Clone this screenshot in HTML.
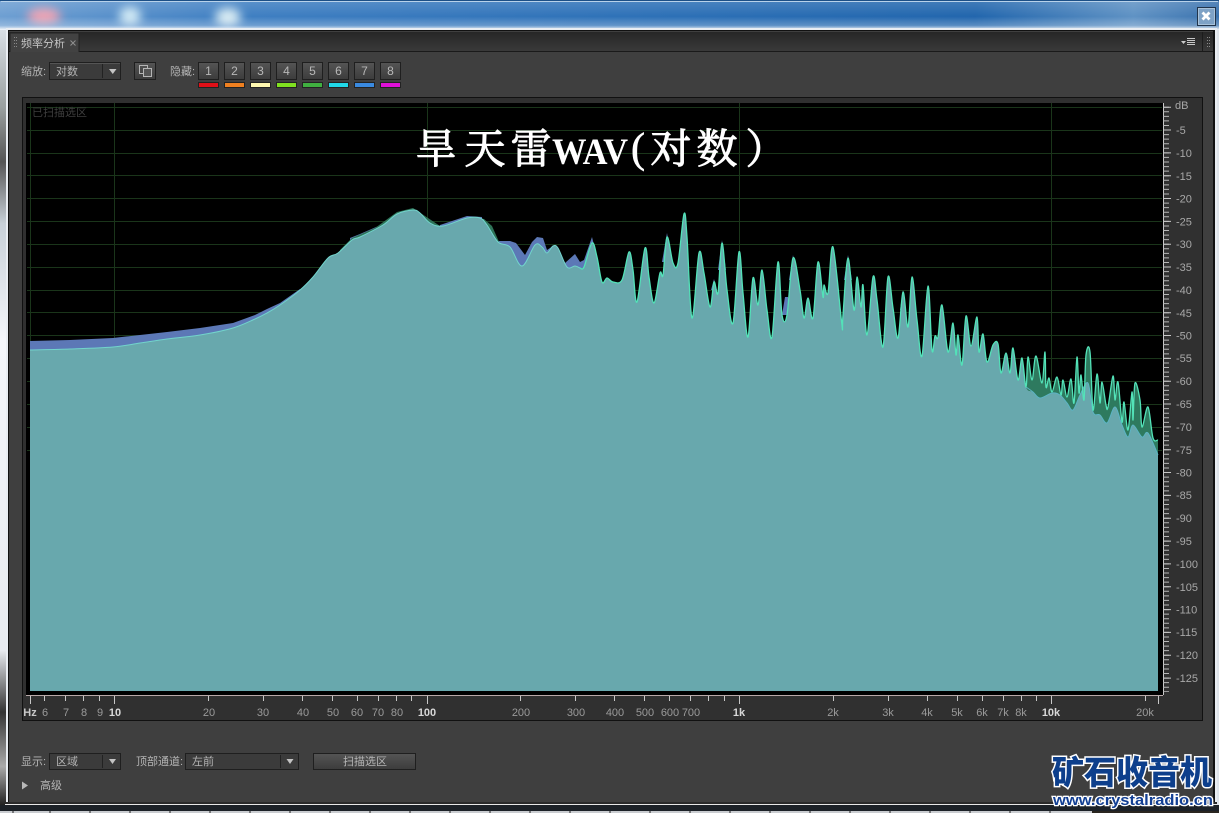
<!DOCTYPE html>
<html lang="zh">
<head>
<meta charset="utf-8">
<title>频率分析</title>
<style>
html,body{margin:0;padding:0;background:#3f3f3f;width:1219px;height:813px;overflow:hidden}
svg{display:block;position:absolute;left:0;top:0}
.l{font-family:"Liberation Sans","Noto Sans CJK SC",sans-serif;font-size:11px;fill:#b4b4b4}
.t{font-family:"Noto Serif CJK SC",serif;font-size:41px;fill:#fff;stroke:#fff;stroke-width:1;text-anchor:middle}
</style>
</head>
<body>
<svg width="1219" height="813" viewBox="0 0 1219 813" xmlns="http://www.w3.org/2000/svg">
<defs>
<linearGradient id="top" x1="0" x2="1" y1="0" y2="0">
<stop offset="0" stop-color="#6e9fd2"/><stop offset=".2" stop-color="#3f7fc2"/><stop offset=".5" stop-color="#2f72b8"/><stop offset=".8" stop-color="#2266ad"/><stop offset=".93" stop-color="#5f92c4"/><stop offset="1" stop-color="#3a72ae"/>
</linearGradient>
<linearGradient id="fade" x1="0" x2="0" y1="0" y2="1">
<stop offset="0" stop-color="#fff" stop-opacity=".15"/><stop offset=".55" stop-color="#fff" stop-opacity="0"/><stop offset=".85" stop-color="#fff" stop-opacity=".25"/><stop offset="1" stop-color="#fff" stop-opacity=".95"/>
</linearGradient>
<linearGradient id="tb" x1="0" x2="0" y1="0" y2="1"><stop offset="0" stop-color="#262626"/><stop offset="1" stop-color="#3a3a3a"/></linearGradient>
<linearGradient id="btn" x1="0" x2="0" y1="0" y2="1"><stop offset="0" stop-color="#555"/><stop offset="1" stop-color="#3c3c3c"/></linearGradient>
<linearGradient id="left" x1="0" x2="0" y1="0" y2="1">
<stop offset="0" stop-color="#d8dee4"/><stop offset=".1" stop-color="#9aa0a0"/><stop offset=".17" stop-color="#555"/><stop offset=".25" stop-color="#c8d0d8"/><stop offset=".4" stop-color="#f4f6fa"/><stop offset=".8" stop-color="#e8ebf0"/><stop offset=".88" stop-color="#333"/><stop offset=".95" stop-color="#aaa"/><stop offset="1" stop-color="#222"/>
</linearGradient>
<filter id="bl" x="-50%" y="-50%" width="200%" height="200%"><feGaussianBlur stdDeviation="5"/></filter>
<filter id="soft" filterUnits="userSpaceOnUse" x="20" y="100" width="1150" height="600"><feGaussianBlur stdDeviation="0.35"/></filter>
</defs>

<!-- desktop behind -->
<rect width="1219" height="813" fill="#dfe4ea"/>
<rect x="0" y="30" width="7" height="775" fill="url(#left)"/>
<rect width="1219" height="30" fill="url(#top)"/>
<ellipse cx="44" cy="16" rx="17" ry="8" fill="#f2a4b4" filter="url(#bl)"/>
<ellipse cx="130" cy="16" rx="11" ry="9" fill="#d4ecf6" filter="url(#bl)"/>
<ellipse cx="228" cy="17" rx="13" ry="9" fill="#dceef4" filter="url(#bl)"/>
<rect width="1219" height="30" fill="url(#fade)"/>
<rect width="1219" height="1" fill="#1c4f86"/>
<rect x="1" y="1" width="1217" height="1" fill="#b8d2ea"/>

<!-- window frame -->
<rect x="6" y="28" width="1211" height="777" fill="#e9edf2"/>
<rect x="8" y="30" width="1207" height="773" fill="#111"/>
<rect x="9" y="31" width="1204" height="771" fill="#3f3f3f"/>
<rect x="5" y="802" width="1212" height="2" fill="#2a2a2a"/>
<rect x="5" y="804" width="1212" height="1" fill="#e8e8e8"/>
<rect x="0" y="805" width="1219" height="6" fill="#1c2127"/>
<rect x="0" y="811" width="1219" height="2" fill="#c9ccd0"/>
<path d="M13 811v2M50 811v2M90 811v2M130 811v2M170 811v2M210 811v2M250 811v2M290 811v2M330 811v2M370 811v2M410 811v2M450 811v2M490 811v2M530 811v2M570 811v2M610 811v2M650 811v2M690 811v2M730 811v2M770 811v2M810 811v2M850 811v2M890 811v2M930 811v2M970 811v2M1010 811v2M1050 811v2" stroke="#222"/>
<rect x="1092" y="811" width="127" height="2" fill="#2a2620"/>

<!-- close button -->
<rect x="1197.500" y="7.500" width="18" height="18" fill="#4f7fb0" stroke="#20344c"/>
<rect x="1198.500" y="8.500" width="16" height="16" fill="#7ea2c6" stroke="#a8c2da"/>
<path d="M1202.500 12.500l7 7M1209.500 12.500l-7 7" stroke="#fff" stroke-width="2.800"/>

<!-- tab bar -->
<rect x="9" y="32" width="1204" height="20" fill="url(#tb)"/>
<rect x="9" y="51" width="1204" height="1" fill="#1a1a1a"/>
<path d="M10 52V33h69v19" fill="#424242" stroke="#222"/>
<path d="M14 37.500h3M14 40.500h3M14 43.500h3M14 46.500h3" stroke="#8a8a8a" stroke-dasharray="1 1"/>
<text class="l" x="21" y="47" style="fill:#c4c4c4">频率分析</text>
<path d="M70.500 40.500l5 5M75.500 40.500l-5 5" stroke="#909090"/>
<path d="M1181 41h5l-2.500 3z" fill="#ccc"/>
<path d="M1187 38.500h8M1187 40.500h8M1187 42.500h8M1187 44.500h8" stroke="#c8c8c8"/>
<path d="M1202.500 32v19" stroke="#1c1c1c"/>
<path d="M1207 37.500h3M1207 40.500h3M1207 43.500h3M1207 46.500h3" stroke="#8a8a8a" stroke-dasharray="1 1"/>

<!-- top controls -->
<text class="l" x="21" y="75">缩放:</text>
<rect x="49.500" y="62.500" width="71" height="17" fill="#3b3b3b" stroke="#1f1f1f"/>
<path d="M50 63.500h70" stroke="#555"/>
<text class="l" x="56" y="75">对数</text>
<path d="M102.500 64v14" stroke="#222"/>
<path d="M109 69h7.500l-3.750 5z" fill="#c4c4c4"/>
<rect x="134.500" y="62.500" width="21" height="17" fill="url(#btn)" stroke="#1f1f1f"/>
<rect x="139.500" y="65.500" width="8" height="8" fill="none" stroke="#b5b5b5"/>
<rect x="143.500" y="68.500" width="8" height="8" fill="#555" stroke="#b5b5b5"/>
<text class="l" x="170" y="75">隐藏:</text>
<g fill="url(#btn)" stroke="#1f1f1f">
<rect x="198.500" y="62.500" width="20" height="17"/><rect x="224.500" y="62.500" width="20" height="17"/><rect x="250.500" y="62.500" width="20" height="17"/><rect x="276.500" y="62.500" width="20" height="17"/><rect x="302.500" y="62.500" width="20" height="17"/><rect x="328.500" y="62.500" width="20" height="17"/><rect x="354.500" y="62.500" width="20" height="17"/><rect x="380.500" y="62.500" width="20" height="17"/>
</g>
<g style="font-size:12px;fill:#b8b8b8;text-anchor:middle;font-family:'Liberation Sans',sans-serif">
<text x="208.500" y="75">1</text><text x="234.500" y="75">2</text><text x="260.500" y="75">3</text><text x="286.500" y="75">4</text><text x="312.500" y="75">5</text><text x="338.500" y="75">6</text><text x="364.500" y="75">7</text><text x="390.500" y="75">8</text>
</g>
<g stroke="#222">
<rect x="198.500" y="82.500" width="20" height="5" fill="#e01018"/><rect x="224.500" y="82.500" width="20" height="5" fill="#f08020"/><rect x="250.500" y="82.500" width="20" height="5" fill="#fff8b0"/><rect x="276.500" y="82.500" width="20" height="5" fill="#80e020"/><rect x="302.500" y="82.500" width="20" height="5" fill="#40b040"/><rect x="328.500" y="82.500" width="20" height="5" fill="#20d8e8"/><rect x="354.500" y="82.500" width="20" height="5" fill="#3a8ae0"/><rect x="380.500" y="82.500" width="20" height="5" fill="#e010d8"/>
</g>

<!-- chart frame -->
<rect x="22.500" y="97.500" width="1180" height="623" fill="#303030" stroke="#111"/>
<rect x="26" y="103" width="1137" height="592" fill="#000"/>

<!-- grid -->
<path d="M27 107.500H1162M27 130.500H1162M27 153.500H1162M27 175.500H1162M27 198.500H1162M27 221.500H1162M27 244.500H1162M27 267.500H1162M27 290.500H1162M27 312.500H1162M27 335.500H1162M27 358.500H1162M27 381.500H1162M27 404.500H1162M27 427.500H1162M27 450.500H1162M114.500 103V691M427.500 103V691M739.500 103V691M1051.500 103V691M30.500 103V691" stroke="#1a351a" fill="none"/>
<text x="32" y="116" style="font-family:'Liberation Sans','Noto Sans CJK SC',sans-serif;font-size:11px;fill:#3e3e3e">已扫描选区</text>

<g filter="url(#soft)">
<!-- blue layer: separate slivers only -->
<path d="M30 341L70 340 113 338 140 335 167 332 200 328 233 323 255 315 267 309 280 303 300 289 300 360 30 360Z" fill="#5b78b6"/>
<path d="M350 238L360 234 383 224 395 216 395 250 350 250Z" fill="#5b78b6"/>
<path d="M440 225L467 216 482 217 482 240 440 240Z" fill="#5b78b6"/>
<path d="M498 241L510 241 516 243 525 255 532 242 537 237 543 238 547 250 553 246 558 248 565 263 575 254 580 262 584 260 592 237 597 257 597 300 498 300Z" fill="#5b78b6"/>
<path d="M662 262L667 233 672 262Z" fill="#5b78b6"/>
<path d="M711 290L714 279 717 290Z" fill="#5b78b6"/>
<path d="M718 270L722 240 726 270Z" fill="#5b78b6"/>
<path d="M782 315L785 297 788 297 791 315Z" fill="#5b78b6"/>
<path d="M789 280L793 255 798 280Z" fill="#5b78b6"/>
<path d="M844 280L848 255 852 280Z" fill="#5b78b6"/>
<path d="M900 310L903 290 906 310Z" fill="#5b78b6"/>
<!-- dark green layer -->
<path d="M340 250L352 238 375 228 397 212 413 208 422 214 440 226 440 300 340 300Z" fill="#2f7358"/>
<path d="M478 218L484 219 492 226 500 244 500 300 478 300Z" fill="#2f7358"/>
<path class="sm" d="M1026 387L1028 357 1032 380 1036 356 1042 383 1045 352 1046 387 1049 378 1052 392 1057 377 1061 395 1063 380 1067 397 1071 379 1074 403 1077 357 1079 393 1081 375 1084 400 1086 355 1090 352 1093 410 1097 374 1100 403 1102 382 1106 405 1108 407 1113 376 1115 400 1118 382 1122 422 1124 402 1128 430 1132 392 1133 420 1135 383 1140 400 1142 427 1148 407 1153 438 1158 440 1158 500 1026 500Z" fill="#2f7a5e"/>
<!-- main fill -->
<path class="sm" d="M30 350L70 349 113 347 140 343 167 339 200 335 233 328 255 319 267 313 280 305 300 290 313 277 328 258 338 253 352 240 360 237 383 225 397 214 413 210 420 213 430 223 443 226 467 218 480 218 487 225 498 242 510 247 522 266 535 245 542 247 547 253 553 246 558 248 567 267 575 266 580 268 584 267 592 243 597 257 602 282 607 278 613 282 622 280 629 252 633 270 637 302 645 248 649 277 654 303 660 273 663 275 667 237 673 263 678 263 684 214 687 237 692 318 699 253 704 273 710 307 714 282 718 293 722 243 727 290 733 323 739 252 743 293 748 337 753 278 758 305 762 270 767 310 772 337 778 262 782 315 787 315 793 258 800 290 804 318 808 298 813 318 818 262 823 297 824 285 828 293 833 247 842 325 843 315 848 258 854 310 857 277 861 307 863 285 867 335 873 277 877 300 883 347 888 277 893 308 898 338 903 292 908 327 912 277 917 320 922 356 928 286 932 350 935 336 938 337 942 305 948 352 953 323 956 355 958 335 962 365 966 316 971 346 977 317 979 352 983 334 987 362 993 345 998 344 1001 373 1006 353 1010 373 1013 348 1018 380 1022 358 1026 387 1033 392 1040 398 1052 393 1060 395 1067 403 1073 410 1080 395 1088 383 1093 412 1100 415 1107 423 1115 407 1122 425 1128 437 1133 425 1142 437 1148 433 1158 455 1158 691 30 691Z" fill="#67a8ad"/>
<!-- lower envelope edge -->
<path class="sm" d="M1026 387L1033 392 1040 398 1052 393 1060 395 1067 403 1073 410 1080 395 1088 383 1093 412 1100 415 1107 423 1115 407 1122 425 1128 437 1133 425 1142 437 1148 433 1158 455" fill="none" stroke="#5cb4c4"/>
<!-- bright lines -->
<path class="sm" d="M30 350L70 349 113 347 140 343 167 339 200 335 233 328 255 319 267 313 280 305 300 290 313 277 328 258 338 253 352 240 360 237 383 225 397 214 413 210 420 213 430 223 443 226 467 218 480 218 487 225 498 242 510 247 522 266 535 245 542 247 547 253 553 246 558 248 567 267 575 266 580 268" fill="none" stroke="#72d4cc" stroke-width="1"/>
<path class="sm" d="M580 268L584 267 592 243 597 257 602 282 607 278 613 282 622 280 629 252 633 270 637 302 645 248 649 277 654 303 660 273 663 275 667 237 673 263 678 263 684 214 687 237 692 318 699 253 704 273 710 307 714 282 718 293 722 243 727 290 733 323 739 252 743 293 748 337 753 278 758 305 762 270 767 310 772 337 778 262 782 315 787 315 793 258 800 290 804 318 808 298 813 318 818 262 823 297 824 285 828 293 833 247 842 325 843 315 848 258 854 310 857 277 861 307 863 285 867 335 873 277 877 300 883 347 888 277 893 308 898 338 903 292 908 327 912 277 917 320 922 356 928 286 932 350 935 336 938 337 942 305 948 352 953 323 956 355 958 335 962 365 966 316 971 346 977 317 979 352 983 334 987 362 993 345 998 344 1001 373 1006 353 1010 373 1013 348 1018 380 1022 358 1026 387 1028 357 1032 380 1036 356 1042 383 1045 352 1046 387 1049 378 1052 392 1057 377 1061 395 1063 380 1067 397 1071 379 1074 403 1077 357 1079 393 1081 375 1084 400 1086 355 1090 352 1093 410 1097 374 1100 403 1102 382 1106 405 1108 407 1113 376 1115 400 1118 382 1122 422 1124 402 1128 430 1132 392 1133 420 1135 383 1140 400 1142 427 1148 407 1153 438 1158 440" fill="none" stroke="#52e2b8" stroke-width="1.300" stroke-linejoin="round"/>
</g>

<!-- title -->
<text class="t" x="436" y="163">旱</text>
<text class="t" x="485" y="163">天</text>
<text class="t" x="531" y="163">雷</text>
<text x="552" y="164" textLength="76" lengthAdjust="spacingAndGlyphs" style="font-family:'Liberation Serif',serif;font-weight:bold;font-size:37px;fill:#fff">WAV</text>
<text x="631" y="162" style="font-family:'Liberation Serif',serif;font-size:42px;fill:#fff;stroke:#fff;stroke-width:.6">(</text>
<text class="t" x="671" y="163">对</text>
<text class="t" x="717" y="163">数</text>
<text class="t" x="766" y="163">）</text>

<!-- dB ruler -->
<path d="M1163.500 103V695" stroke="#c8c8c8"/>
<path d="M1166 106.700V692" stroke="#b8b8b8" stroke-width="6" stroke-dasharray="1 3.567" fill="none"/>
<path d="M1167 106.700V692" stroke="#c8c8c8" stroke-width="8" stroke-dasharray="1 21.835" fill="none"/>
<g fill="#a8a8a8" font-family="Liberation Sans, sans-serif" font-size="11">
<text x="1175" y="109">dB</text>
<text x="1176" y="134">-5</text><text x="1176" y="157">-10</text><text x="1176" y="180">-15</text><text x="1176" y="202.500">-20</text><text x="1176" y="225.500">-25</text><text x="1176" y="248">-30</text><text x="1176" y="271">-35</text><text x="1176" y="294">-40</text><text x="1176" y="317">-45</text><text x="1176" y="339.500">-50</text><text x="1176" y="362">-55</text><text x="1176" y="385">-60</text><text x="1176" y="408">-65</text><text x="1176" y="431">-70</text><text x="1176" y="454">-75</text><text x="1176" y="476.500">-80</text><text x="1176" y="499">-85</text><text x="1176" y="522">-90</text><text x="1176" y="545">-95</text><text x="1176" y="568">-100</text><text x="1176" y="591">-105</text><text x="1176" y="613.500">-110</text><text x="1176" y="636">-115</text><text x="1176" y="659">-120</text><text x="1176" y="682">-125</text>
</g>

<!-- freq axis -->
<path d="M26 695.500H1163" stroke="#b9a9a9"/>
<path d="M30.500 696v8M44.500 696v5M65.500 696v5M83.500 696v5M99.500 696v5M114.500 696v8M208.500 696v5M263.500 696v5M302.500 696v5M332.500 696v5M357.500 696v5M378.500 696v5M396.500 696v5M411.500 696v5M427.500 696v8M520.500 696v5M575.500 696v5M614.500 696v5M644.500 696v5M669.500 696v5M690.500 696v5M708.500 696v5M724.500 696v5M739.500 696v8M833.500 696v5M888.500 696v5M927.500 696v5M957.500 696v5M982.500 696v5M1003.500 696v5M1021.500 696v5M1036.500 696v5M1051.500 696v8M1145.500 696v5M1158.500 696v8" stroke="#c8c8c8"/>
<g font-family="Liberation Sans, sans-serif" font-size="11" fill="#9a9a9a" text-anchor="middle">
<text x="30" y="716" fill="#c8c8c8" font-weight="bold">Hz</text>
<text x="45" y="716">6</text><text x="66" y="716">7</text><text x="84" y="716">8</text><text x="100" y="716">9</text>
<text x="115" y="716" fill="#d8d8d8" font-weight="bold">10</text>
<text x="209" y="716">20</text><text x="263" y="716">30</text><text x="303" y="716">40</text><text x="333" y="716">50</text><text x="357" y="716">60</text><text x="378" y="716">70</text><text x="397" y="716">80</text>
<text x="427" y="716" fill="#d8d8d8" font-weight="bold">100</text>
<text x="521" y="716">200</text><text x="576" y="716">300</text><text x="615" y="716">400</text><text x="645" y="716">500</text><text x="670" y="716">600</text><text x="691" y="716">700</text>
<text x="739" y="716" fill="#d8d8d8" font-weight="bold">1k</text>
<text x="833" y="716">2k</text><text x="888" y="716">3k</text><text x="927" y="716">4k</text><text x="957" y="716">5k</text><text x="982" y="716">6k</text><text x="1003" y="716">7k</text><text x="1021" y="716">8k</text>
<text x="1051" y="716" fill="#d8d8d8" font-weight="bold">10k</text>
<text x="1145" y="716">20k</text>
</g>

<!-- bottom controls -->
<text class="l" x="21" y="765">显示:</text>
<rect x="49.500" y="753.500" width="71" height="16" fill="#3b3b3b" stroke="#1f1f1f"/>
<text class="l" x="56" y="765">区域</text>
<path d="M102.500 755v13" stroke="#222"/>
<path d="M109 759h7l-3.500 5z" fill="#c4c4c4"/>
<text class="l" x="136" y="765">顶部通道:</text>
<rect x="185.500" y="753.500" width="113" height="16" fill="#3b3b3b" stroke="#1f1f1f"/>
<text class="l" x="192" y="765">左前</text>
<path d="M280.500 755v13" stroke="#222"/>
<path d="M286.500 759h7l-3.500 5z" fill="#c4c4c4"/>
<rect x="313.500" y="753.500" width="102" height="16" fill="url(#btn)" stroke="#1f1f1f"/>
<text class="l" x="343" y="765">扫描选区</text>
<path d="M22 781.500l6 4-6 4z" fill="#b8b8b8"/>
<text class="l" x="40" y="789">高级</text>

<!-- watermark -->
<text x="1052" y="784" textLength="160" lengthAdjust="spacingAndGlyphs" style="font-family:'Noto Sans CJK SC','WenQuanYi Zen Hei',sans-serif;font-weight:900;font-size:33px;fill:#0d3f8c;stroke:#fff;stroke-width:3;paint-order:stroke">矿石收音机</text>
<text x="1053" y="805" textLength="160" lengthAdjust="spacingAndGlyphs" style="font-family:'Liberation Sans',sans-serif;font-weight:bold;font-size:15px;fill:#123f94;stroke:#fff;stroke-width:2.500;paint-order:stroke">www.crystalradio.cn</text>
</svg>
<script>
document.querySelectorAll('path.sm').forEach(function(el){
  var d=el.getAttribute('d'),closed=/Z/.test(d),n=d.match(/-?\d+\.?\d*/g).map(Number),p=[];
  for(var i=0;i<n.length;i+=2)p.push([n[i],n[i+1]]);
  var s='M'+p[0][0]+' '+p[0][1],t=1/6,c=function(v,a,b){return Math.max(Math.min(a,b),Math.min(Math.max(a,b),v));};
  for(i=0;i<p.length-1;i++){
    var a=p[i],b=p[i+1];
    if(closed&&(b[1]>=480||a[1]>=480)){s+='L'+b[0]+' '+b[1];continue;}
    var z=p[i-1]||a,e=p[i+2]||b;
    if(closed&&e[1]>=480)e=b;
    var x1=c(a[0]+(b[0]-z[0])*t,a[0],b[0]),y1=a[1]+(b[1]-z[1])*t,x2=c(b[0]-(e[0]-a[0])*t,a[0],b[0]),y2=b[1]-(e[1]-a[1])*t;
    s+='C'+x1.toFixed(1)+' '+y1.toFixed(1)+' '+x2.toFixed(1)+' '+y2.toFixed(1)+' '+b[0]+' '+b[1];
  }
  el.setAttribute('d',s+(closed?'Z':''));
});
</script>
</body>
</html>
